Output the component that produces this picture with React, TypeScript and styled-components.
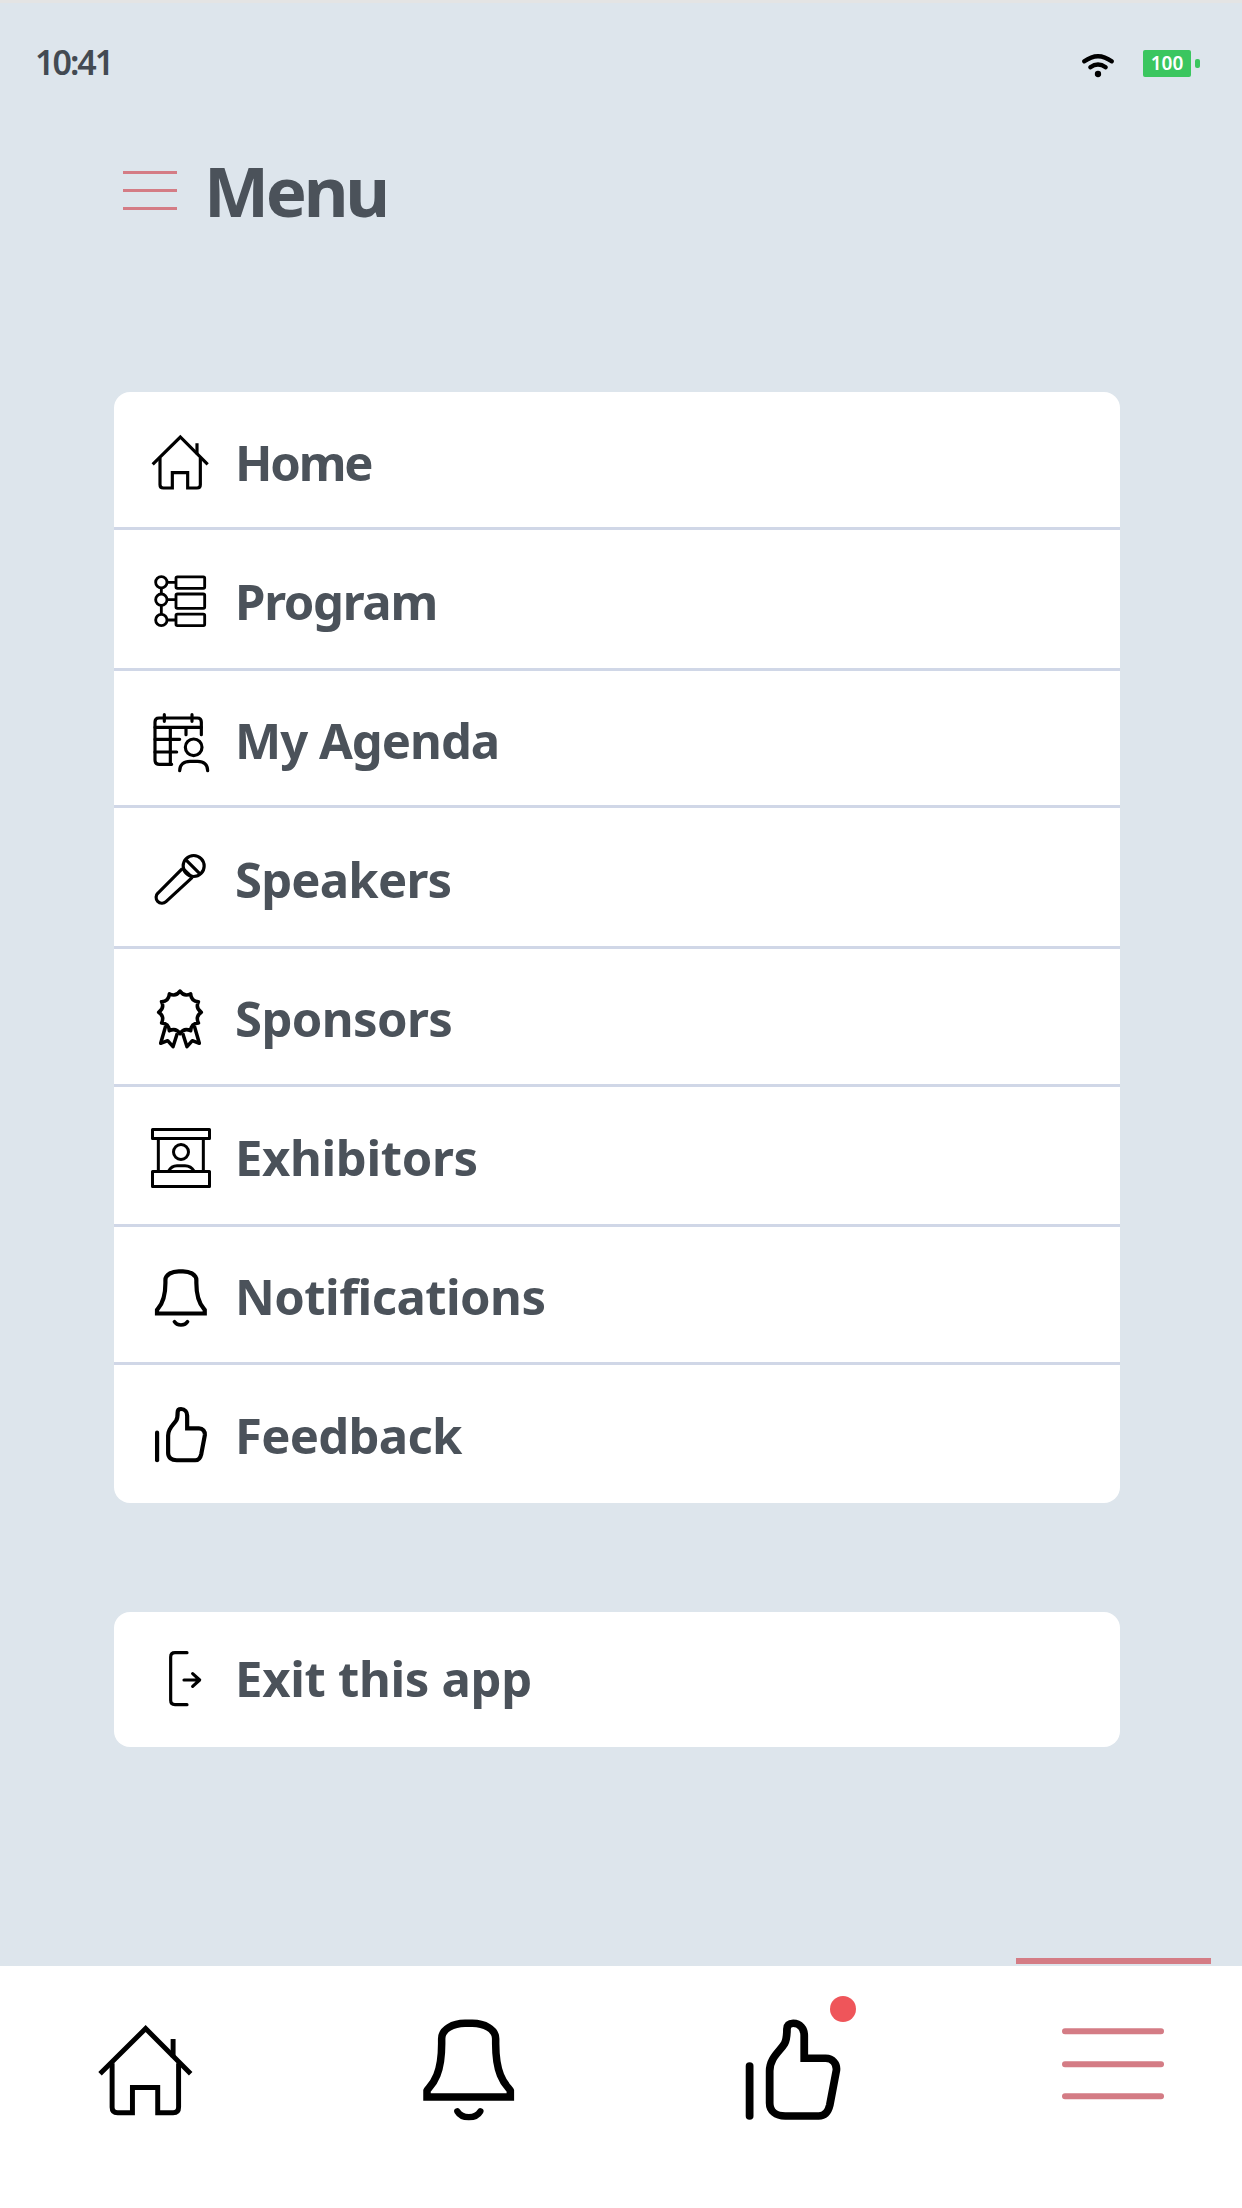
import React from 'react';
import styled, { createGlobalStyle } from 'styled-components';

const GlobalStyle = createGlobalStyle`
  * {
    box-sizing: border-box;
  }

  body {
    margin: 0;
    background-color: #dde5ec;
    font-family: 'Noto Sans', 'Open Sans', sans-serif;
  }
`;

const Screen = styled.div`
  display: flex;
  flex-direction: column;
  width: 1242px;
  height: 2208px;
  overflow: hidden;
  border-top: 3px solid #e4e4e4;
  background-color: #dde5ec;
  color: #4b525a;
`;

const StatusBar = styled.header`
  display: flex;
  align-items: center;
  justify-content: space-between;
  height: 120px;
  padding: 0 42px 0 35px;
`;

const Clock = styled.span`
  margin-bottom: 2px;
  color: #434a52;
  font-size: 34px;
  font-weight: 600;
  line-height: 40px;
  letter-spacing: -2px;
`;

const StatusIcons = styled.div`
  display: flex;
  align-items: center;
`;

const WifiIcon = styled.svg`
  width: 32px;
  height: 26px;
  margin: 3px 29px 0 0;
`;

const Battery = styled.div`
  display: flex;
  align-items: center;
  gap: 4px;
`;

const BatteryLevel = styled.div`
  width: 48px;
  height: 27px;
  border-radius: 2px;
  background-color: #3bc65f;
  color: #ffffff;
  font-size: 19px;
  font-weight: 600;
  line-height: 27px;
  text-align: center;
`;

const BatteryTip = styled.div`
  width: 5px;
  height: 9px;
  border-radius: 2px;
  background-color: #3bc65f;
`;

const TitleBar = styled.div`
  display: flex;
  align-items: center;
  height: 134px;
  padding: 0 0 0 123px;
  margin-bottom: 135px;
`;

const TitleLines = styled.div`
  width: 54px;
  height: 39px;
  margin: 1px 27px 0 0;
  border-top: 3px solid #d47c85;
  border-bottom: 3px solid #d47c85;
  padding-top: 15px;

  &::before {
    content: '';
    display: block;
    height: 3px;
    background-color: #d47c85;
  }
`;

const Title = styled.h1`
  margin: 0;
  font-size: 69px;
  font-weight: 700;
  line-height: 80px;
  letter-spacing: -3.3px;
`;

const Card = styled.div`
  width: 1006px;
  margin: 0 0 109px 114px;
  border-radius: 16px;
  background-color: #ffffff;
  overflow: hidden;
`;

const Row = styled.div<{ $height: number; $top: number }>`
  display: flex;
  align-items: flex-start;
  height: ${({ $height }) => $height}px;
  padding: ${({ $top }) => $top}px 0 0 34px;

  &:not(:last-child) {
    border-bottom: 3px solid #d0d7e7;
  }
`;

const RowIcon = styled.svg`
  flex: none;
  width: 64px;
  height: 66px;
  margin-right: 23px;
`;

const Label = styled.span<{ $tracking: number }>`
  font-size: 49px;
  font-weight: 700;
  line-height: 64px;
  letter-spacing: ${({ $tracking }) => $tracking}px;
  white-space: nowrap;
`;

const TabBar = styled.nav`
  display: grid;
  grid-template-columns: 321px 321.5px 320.5px 102px;
  align-items: start;
  height: 242px;
  margin-top: auto;
  padding: 51px 0 0 99px;
  background-color: #ffffff;
`;

const Tab = styled.div<{ $active?: boolean }>`
  position: relative;
  height: 107px;

  &::before {
    content: '';
    display: ${({ $active }) => ($active ? 'block' : 'none')};
    position: absolute;
    top: -59px;
    left: -46px;
    width: 195px;
    height: 6px;
    background-color: #d47c85;
  }
`;

const TabIcon = styled.svg`
  display: block;
  width: 96.7px;
  height: 106.7px;
  overflow: visible;
`;

const Dot = styled.span`
  position: absolute;
  top: -21px;
  left: 88px;
  width: 26px;
  height: 26px;
  border-radius: 50%;
  background-color: #ef555a;
`;

const HomeShape = () => (
  <>
    <path d="M14 103 L97 21 L179 103" />
    <path d="M36 84 V164 Q36 174 46 174 H73 V128 H119 V174 H147 Q157 174 157 164 V84" />
    <path d="M147 40 V73" />
  </>
);

const BellShape = () => (
  <>
    <path d="M21 240 V221 C26 209 65 190 65 80 V65 C65 36 100 19 135 19 H157 C192 19 227 36 227 65 V80 C227 190 266 209 271 221 V240 Z" />
    <path d="M112 283 C125 306 168 306 181 283" strokeWidth="19" strokeLinecap="round" />
  </>
);

const ThumbShape = () => (
  <>
    <path d="M22 147 V297" strokeLinecap="round" />
    <path d="M180 124 V55 C180 36 168 19 148 19 C136 19 130 25 130 36 C130 55 130 66 123 80 C110 103 80 122 80 162 V258 C80 282 98 297 125 297 H222 C238 297 249 286 254 264 L273 160 C275 140 262 124 242 124 Z" />
  </>
);

const HomeIcon = () => <HomeShape />;

const ProgramIcon = () => (
  <g strokeWidth="8.5">
    <circle cx="40" cy="40" r="17" />
    <circle cx="40" cy="92" r="17" />
    <circle cx="40" cy="153" r="17" />
    <rect x="84" y="23.5" width="86" height="34.5" rx="4" />
    <rect x="84" y="75" width="86" height="43" rx="4" />
    <rect x="84" y="135.5" width="86" height="34.5" rx="4" />
    <path d="M57 40 H84 M57 92 H84 M57 153 H84 M40 57 V75 M40 109 V136" />
  </g>
);

const AgendaIcon = () => (
  <g strokeLinecap="round">
    <path d="M160 80 V42 Q160 30 148 30 H33 Q21 30 21 42 V156 Q21 169 34 169 H71" />
    <path d="M21 58 H160 M49 20 V40 M132 20 V40 M67 58 V169 M114 58 V80" />
    <path d="M21 94 H95 M21 132 H86" />
    <circle cx="137" cy="118" r="25" />
    <path d="M95 188 C95 170 108 160 126 160 H149 C167 160 179 170 179 188" />
  </g>
);

const SpeakerIcon = () => (
  <g>
    <circle cx="137" cy="57" r="31.5" />
    <path d="M113 38 L155 80" />
    <path d="M103 65 L30 138 A17 17 0 0 0 54 164 L133 91" />
    <path d="M106 66 L130 89" />
  </g>
);

const BADGE_POINTS = 12;

const badgePath = () => {
  const at = (step: number, r: number) => {
    const a = (step * Math.PI) / BADGE_POINTS;
    return `${(96 + r * Math.sin(a)).toFixed(1)} ${(79 - r * Math.cos(a)).toFixed(1)}`;
  };
  let d = `M${at(0, 64)}`;
  for (let i = 0; i < BADGE_POINTS; i++) {
    d += ` Q${at(i * 2 + 1, 47)} ${at(i * 2 + 2, 64)}`;
  }
  return `${d} Z`;
};

const SponsorIcon = () => (
  <g strokeWidth="10.5" strokeLinejoin="round">
    <path d={badgePath()} />
    <path d="M53 120 L38 172 L59 164 L75 182 L88 142" />
    <path d="M139 120 L154 172 L133 164 L117 182 L104 142" />
  </g>
);

const ExhibitorIcon = () => (
  <g strokeWidth="9" strokeLinejoin="round">
    <rect x="13.5" y="13.5" width="171" height="27" />
    <rect x="13.5" y="139.5" width="171" height="45" />
    <path d="M31 41 V139 M166 41 V139" />
    <circle cx="99" cy="81" r="22.5" />
    <path d="M62 138 Q70 122 87 122 H111 Q129 122 138 138" />
  </g>
);

const BellIcon = () => (
  <g transform="translate(15 11) scale(0.573)" strokeWidth="22">
    <BellShape />
  </g>
);

const ThumbIcon = () => (
  <g transform="translate(14.7 7.6) scale(0.571 0.553)" strokeWidth="22">
    <ThumbShape />
  </g>
);

const ExitIcon = () => (
  <g strokeLinecap="round" strokeLinejoin="round">
    <path d="M117 20 H81 Q68 20 68 33 V163 Q68 176 81 176 H117" />
    <path d="M108 102 H154 M134 83 L155 102 L134 121" />
  </g>
);

const menuItems = [
  { label: 'Home', icon: <HomeIcon />, height: 138, top: 38, tracking: -2.2 },
  { label: 'Program', icon: <ProgramIcon />, height: 141, top: 39, tracking: -1.3 },
  { label: 'My Agenda', icon: <AgendaIcon />, height: 137, top: 37, tracking: -1 },
  { label: 'Speakers', icon: <SpeakerIcon />, height: 141, top: 39, tracking: -0.8 },
  { label: 'Sponsors', icon: <SponsorIcon />, height: 138, top: 37, tracking: -0.6 },
  { label: 'Exhibitors', icon: <ExhibitorIcon />, height: 140, top: 38, tracking: -0.35 },
  { label: 'Notifications', icon: <BellIcon />, height: 138, top: 37, tracking: -0.55 },
  { label: 'Feedback', icon: <ThumbIcon />, height: 138, top: 38, tracking: -0.7 },
];

type MenuRowProps = {
  label: string;
  icon: React.ReactNode;
  height: number;
  top: number;
  tracking: number;
};

const MenuRow = ({ label, icon, height, top, tracking }: MenuRowProps) => (
  <Row $height={height} $top={top}>
    <RowIcon viewBox="0 0 192 198" fill="none" stroke="#000" strokeWidth="9.5">
      {icon}
    </RowIcon>
    <Label $tracking={tracking}>{label}</Label>
  </Row>
);

const App = () => {
  return (
    <>
      <GlobalStyle />
      <Screen>
        <StatusBar>
          <Clock>10:41</Clock>
          <StatusIcons>
            <WifiIcon viewBox="0 0 96 78" fill="none" stroke="#000" strokeLinecap="round">
              <path d="M7 28 Q48 -3 89 28" strokeWidth="13" />
              <path d="M25 46 Q48 29 71 46" strokeWidth="13" />
              <circle cx="48" cy="66" r="9.5" fill="#000" stroke="none" />
            </WifiIcon>
            <Battery>
              <BatteryLevel>100</BatteryLevel>
              <BatteryTip />
            </Battery>
          </StatusIcons>
        </StatusBar>

        <TitleBar>
          <TitleLines />
          <Title>Menu</Title>
        </TitleBar>

        <Card>
          {menuItems.map((item) => (
            <MenuRow key={item.label} {...item} />
          ))}
        </Card>

        <Card>
          <MenuRow label="Exit this app" icon={<ExitIcon />} height={135} top={34} tracking={-0.3} />
        </Card>

        <TabBar>
          <Tab>
            <TabIcon viewBox="0 0 290 320" fill="none" stroke="#000">
              <g transform="translate(-20 0) scale(1.648 1.652)" strokeWidth="9">
                <HomeShape />
              </g>
            </TabIcon>
          </Tab>
          <Tab>
            <TabIcon viewBox="0 0 290 320" fill="none" stroke="#000" strokeWidth="22.5">
              <BellShape />
            </TabIcon>
          </Tab>
          <Tab>
            <TabIcon viewBox="0 0 290 320" fill="none" stroke="#000" strokeWidth="22.5">
              <g transform="scale(1.037 1)">
                <ThumbShape />
              </g>
            </TabIcon>
            <Dot />
          </Tab>
          <Tab $active>
            <TabIcon
              viewBox="0 0 290 320"
              fill="none"
              stroke="#d47c85"
              strokeWidth="18"
              strokeLinecap="round"
            >
              <path d="M9 43 H297 M9 142 H297 M9 238 H297" />
            </TabIcon>
          </Tab>
        </TabBar>
      </Screen>
    </>
  );
};

export default App;
